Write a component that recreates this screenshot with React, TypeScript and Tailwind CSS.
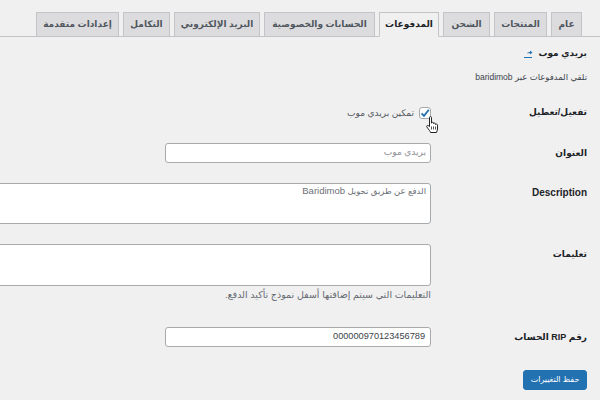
/**
 * WooCommerce payment settings page (RTL) - Baridimob gateway.
 */
const font = "font-['Liberation_Sans','DejaVu_Sans',sans-serif]";

const tabs = ['عام', 'المنتجات', 'الشحن', 'المدفوعات', 'الحسابات والخصوصية', 'البريد الإلكتروني', 'التكامل', 'إعدادات متقدمة'];
const tabWidths = ['w-[31px]', 'w-[53px]', 'w-[47px]', 'w-[60px]', 'w-[111px]', 'w-[86px]', 'w-[47px]', 'w-[83px]'];

function Row({ label, className, children }: { label: React.ReactNode; className: string; children: React.ReactNode }) {
  return (
    <div className={`flex items-start ${className}`}>
      <label className="mt-[2px] w-[156px] shrink-0 text-[9px] leading-[16px] font-bold text-[#1d2327]">{label}</label>
      <div className="min-w-0">{children}</div>
    </div>
  );
}

function HandCursor() {
  return (
    <svg width="13" height="18" viewBox="0 0 13 18" className="absolute left-[426px] top-[116px]">
      <path
        d="M3.500 1.500c0-1.200 2-1.200 2 0v5.700l.3-.5c.3-.8 1.700-.6 1.700.4v.6l.3-.3c.4-.6 1.700-.4 1.700.5v.6l.3-.2c.5-.5 1.700-.2 1.700.8v3.900c0 1.500-.8 2.300-1 3.500H4.500c-.2-1.300-1.500-2.500-3.600-5.500-.7-1 .5-2.100 1.500-1.300l1.100 1z"
        fill="#fff"
        stroke="#222"
        strokeWidth="1"
        strokeLinejoin="round"
      />
      <path d="M5.500 10.500v3M7.500 10.500v3M9.500 10.500v3" stroke="#222" strokeWidth="0.8" />
    </svg>
  );
}

export default function App() {
  return (
    <div dir="rtl" className={`relative h-[400px] w-[600px] overflow-hidden bg-[#f0f0f1] ${font} text-[#3c434a]`}>
      {/* Tabs */}
      <div className="flex h-[37px] items-end gap-[4px] border-b border-[#c3c4c7] pr-[18px]">
        {tabs.map((t, i) => (
          <div
            key={t}
            className={`-mb-px flex h-[25px] shrink-0 items-center justify-center border border-[#c3c4c7] text-[9px] font-bold whitespace-nowrap ${tabWidths[i]} ${
              i === 3 ? 'border-b-[#f0f0f1] bg-[#f0f0f1] text-[#1d2327]' : 'bg-[#dcdcde] text-[#50575e]'
            }`}
          >
            {t}
          </div>
        ))}
      </div>

      <div className="pr-[13px]">
        {/* Heading */}
        <div className="mt-[10px] flex h-[14px] items-center gap-[5px] text-[9px] font-bold text-[#1d2327]">
          <span>بريدي موب</span>
          <svg width="9" height="8" viewBox="0 0 9 8">
            <path d="M0 7.500h8" stroke="#2271b1" strokeWidth="1" />
            <path d="M3 3.500C3.500 2.500 5 2 6 2V.5L8.500 2.500 6 4.500V3.200c-1 0-2 .1-3 .3z" fill="#2271b1" />
          </svg>
        </div>

        <p className="mt-[9px] h-[14px] text-[8.5px] leading-[14px]">تلقي المدفوعات عبر baridimob</p>

        <Row label="تفعيل/تعطيل" className="mt-[18px] h-[41px]">
          <div className="mt-[3px] flex items-center gap-[5px] text-[9px] text-[#50575e]">
            <span className="flex h-[12px] w-[12px] items-center justify-center rounded-[3px] border border-[#a7aaad] bg-white">
              <svg width="10" height="10" viewBox="0 0 10 10">
                <path d="M1.500 5.300 4 7.800 8.800 1.800" fill="none" stroke="#2271b1" strokeWidth="1.800" />
              </svg>
            </span>
            <span className="mt-[2px]">تمكين بريدي موب</span>
          </div>
        </Row>

        <Row label="العنوان" className="h-[40px]">
          <div className="flex h-[20px] w-[266px] items-center rounded-[3px] border border-[#a7aaad] bg-white px-[4px] text-[9px] text-[#8c8f94]">
            بريدي موب
          </div>
        </Row>

        <Row label={<span className="text-[10px]">Description</span>} className="h-[61px]">
          <div className="h-[41px] w-[520px] rounded-[3px] border border-[#a7aaad] bg-white px-[4px] text-[8.5px] leading-[13px] text-[#6b6f75]">
            الدفع عن طريق تحويل <span className="text-[9.500px]">Baridimob</span>
          </div>
        </Row>

        <Row label="تعليمات" className="h-[83px]">
          <div className="h-[42px] w-[520px] rounded-[3px] border border-[#a7aaad] bg-white" />
          <p className="mt-[2px] text-[9.500px] leading-[14px] text-[#646970]">التعليمات التي سيتم إضافتها أسفل نموذج تأكيد الدفع.</p>
        </Row>

        <Row label="رقم RIP الحساب" className="h-[43px]">
          <div className="flex h-[20px] w-[266px] items-center rounded-[3px] border border-[#a7aaad] bg-white px-[5px] text-[9.200px] text-[#3c434a]">
            000000970123456789
          </div>
        </Row>

        <button className="flex h-[20px] w-[64px] items-center justify-center rounded-[3px] border border-[#2271b1] bg-[#2271b1] text-[8px] text-white">
          حفظ التغييرات
        </button>
      </div>

      <HandCursor />
    </div>
  );
}
